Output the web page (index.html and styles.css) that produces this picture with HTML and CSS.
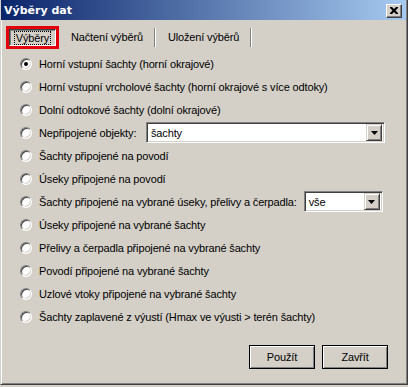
FILE: index.html
```html
<!DOCTYPE html>
<html>
<head>
<meta charset="utf-8">
<link rel="stylesheet" href="styles.css">
</head>
<body>
<div class="window">
  <div class="titlebar">
    <span class="title">Výběry dat</span>
    <span class="close"><svg width="8" height="7" viewBox="0 0 8 7"><path d="M0 0h2l2 2 2-2h2v1l-2.5 2.5L8 6v1H6L4 5 2 7H0V6l2.5-2.5L0 1z" fill="#000"/></svg></span>
  </div>
  <div class="tabs">
    <div class="tab-active-wrap"><div class="tab-active"><span class="focus">Výběry</span></div></div>
    <div class="tab">Načtení výběrů</div>
    <div class="tab">Uložení výběrů</div>
  </div>
  <div class="options">
    <div class="row"><span class="radio checked"></span><span>Horní vstupní šachty (horní okrajové)</span></div>
    <div class="row"><span class="radio"></span><span>Horní vstupní vrcholové šachty (horní okrajové s více odtoky)</span></div>
    <div class="row"><span class="radio"></span><span>Dolní odtokové šachty (dolní okrajové)</span></div>
    <div class="row"><span class="radio"></span><span class="lbl1">Nepřipojené objekty:</span>
      <div class="combo combo-wide"><span class="combo-text">šachty</span><span class="combo-btn"><svg width="7" height="4" viewBox="0 0 7 4"><path d="M0 0h7L3.5 4z" fill="#000"/></svg></span></div>
    </div>
    <div class="row"><span class="radio"></span><span>Šachty připojené na povodí</span></div>
    <div class="row"><span class="radio"></span><span>Úseky připojené na povodí</span></div>
    <div class="row"><span class="radio"></span><span class="lbl2">Šachty připojené na vybrané úseky, přelivy a čerpadla:</span>
      <div class="combo combo-small"><span class="combo-text">vše</span><span class="combo-btn"><svg width="7" height="4" viewBox="0 0 7 4"><path d="M0 0h7L3.5 4z" fill="#000"/></svg></span></div>
    </div>
    <div class="row"><span class="radio"></span><span>Úseky připojené na vybrané šachty</span></div>
    <div class="row"><span class="radio"></span><span>Přelivy a čerpadla připojené na vybrané šachty</span></div>
    <div class="row"><span class="radio"></span><span>Povodí připojené na vybrané šachty</span></div>
    <div class="row"><span class="radio"></span><span>Uzlové vtoky připojené na vybrané šachty</span></div>
    <div class="row"><span class="radio"></span><span>Šachty zaplavené z výustí (Hmax ve výusti &gt; terén šachty)</span></div>
  </div>
  <div class="buttons">
    <div class="btn">Použít</div>
    <div class="btn">Zavřít</div>
  </div>
</div>
</body>
</html>
```
FILE: styles.css
```css
html, body {
  margin: 0;
  padding: 0;
}
body {
  width: 408px;
  height: 387px;
  overflow: hidden;
  background: #d4d0c8;
  font-family: "Liberation Sans", Arial, sans-serif;
  font-size: 11px;
  letter-spacing: -0.15px;
  color: #000;
}
.window {
  box-sizing: border-box;
  width: 408px;
  height: 385px;
  border-left: 1px solid #d4d0c8;
  border-right: 1px solid #404040;
  border-bottom: 1px solid #404040;
  box-shadow: inset 1px 0 #fff, inset -1px -1px #808080;
  padding: 0 3px 0 2px;
  display: flex;
  flex-direction: column;
}
.titlebar {
  height: 20px;
  margin: 0 -2px 0 -2px;
  background: linear-gradient(to right, #0a246a, #a6caf0);
  display: flex;
  align-items: center;
  justify-content: space-between;
  padding: 0 4px 0 3px;
}
.title {
  color: #fff;
  font-weight: bold;
  font-family: "DejaVu Sans", sans-serif;
  font-size: 11px;
  letter-spacing: 0;
}
.close {
  box-sizing: border-box;
  width: 16px;
  height: 14px;
  background: #d4d0c8;
  border-top: 1px solid #fff;
  border-left: 1px solid #fff;
  border-right: 1px solid #404040;
  border-bottom: 1px solid #404040;
  box-shadow: inset -1px -1px #808080;
  display: flex;
  align-items: center;
  justify-content: center;
  margin-top: 1px;
}
.tabs {
  display: flex;
  align-items: center;
  margin-top: 6px;
  padding-left: 3px;
  height: 23px;
}
.tab-active-wrap {
  box-sizing: border-box;
  width: 53px;
  height: 23px;
  border: 3px solid #e3000b;
  padding: 0;
}
.tab-active {
  box-sizing: border-box;
  height: 17px;
  border-top: 1px solid #404040;
  border-left: 1px solid #404040;
  border-right: 1px solid #fff;
  border-bottom: 1px solid #fff;
  box-shadow: inset 1px 1px #808080;
  display: flex;
  align-items: center;
  justify-content: center;
  background: #d4d0c8;
}
.focus {
  outline: 1px dotted #000;
  padding: 0 1px;
  line-height: 12px;
}
.tab {
  padding: 0 11px 0 12px;
  border-right: 1px solid #808080;
  box-shadow: 1px 0 #fff;
  height: 19px;
  line-height: 19px;
  margin-right: 1px;
}
.options {
  display: flex;
  flex-direction: column;
  margin-top: 3px;
  padding-left: 17px;
}
.row {
  height: 23px;
  display: flex;
  align-items: center;
}
.radio {
  box-sizing: border-box;
  width: 12px;
  height: 12px;
  border-radius: 50%;
  background: #fff;
  border: 1px solid;
  border-color: #808080 #fff #fff #808080;
  box-shadow: inset 1px 1px #404040, inset -1px -1px #d4d0c8;
  margin-right: 7px;
  position: relative;
  flex: none;
}
.radio.checked::after {
  content: "";
  position: absolute;
  left: 3px;
  top: 3px;
  width: 4px;
  height: 4px;
  border-radius: 50%;
  background: #000;
}
.lbl1 {
  width: 107px;
}
.lbl2 {
  margin-right: 7px;
}
.combo {
  box-sizing: border-box;
  height: 21px;
  background: #fff;
  border: 1px solid;
  border-color: #808080 #fff #fff #808080;
  box-shadow: inset 1px 1px #404040, inset -1px -1px #d4d0c8;
  display: flex;
  align-items: center;
  justify-content: space-between;
  padding: 2px;
}
.combo-wide {
  width: 239px;
}
.combo-small {
  width: 79px;
}
.combo-text {
  padding-left: 2px;
}
.combo-btn {
  box-sizing: border-box;
  width: 16px;
  height: 17px;
  background: #d4d0c8;
  border-top: 1px solid #d4d0c8;
  border-left: 1px solid #d4d0c8;
  border-right: 1px solid #404040;
  border-bottom: 1px solid #404040;
  box-shadow: inset 1px 1px #fff, inset -1px -1px #808080;
  display: flex;
  align-items: center;
  justify-content: center;
}
.buttons {
  display: flex;
  justify-content: flex-end;
  gap: 7px;
  margin-top: 17px;
  padding-right: 16px;
}
.btn {
  box-sizing: border-box;
  width: 66px;
  height: 24px;
  border: 1px solid #000;
  box-shadow: inset 1px 1px #fff, inset -1px -1px #808080;
  display: flex;
  align-items: center;
  justify-content: center;
}
```
